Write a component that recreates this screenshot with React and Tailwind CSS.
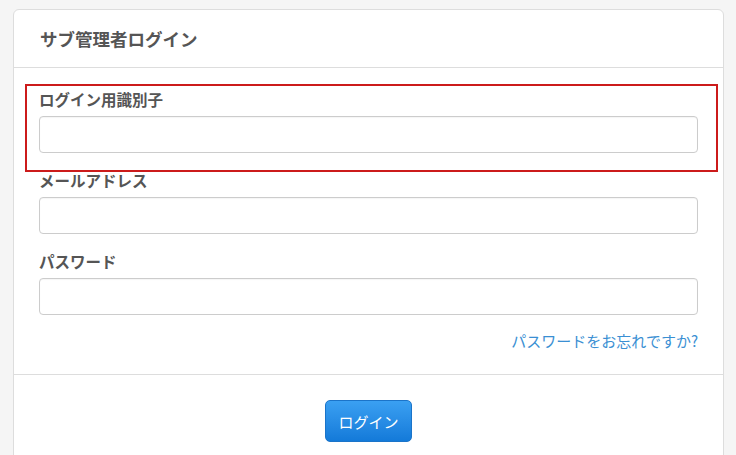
export default function App() {
    const font = { fontFamily: '"Noto Sans CJK JP", "Noto Sans", sans-serif' };
    const fields = ["ログイン用識別子", "メールアドレス", "パスワード"];

    return (
        <div className="min-h-[455px] bg-[#f5f5f5] pt-[9px] pl-[13px] overflow-hidden" style={font}>
            <div className="relative w-[711px] bg-white border border-[#dddddd] rounded-[6px]">
                <div className="h-[58px] px-[26px] flex items-center border-b border-[#dddddd]">
                    <h1 className="text-[17.5px] font-bold text-[#555555] leading-none">サブ管理者ログイン</h1>
                </div>

                <div className="px-[25px] pt-[21px] pb-[23px]">
                    {fields.map((label) => (
                        <div key={label} className="mb-[17px]">
                            <label className="block h-[20px] leading-[20px] text-[15.5px] font-bold text-[#555555] mb-[7px]">
                                {label}
                            </label>
                            <input
                                type={label === "パスワード" ? "password" : "text"}
                                className="block w-full h-[37px] border border-[#cccccc] rounded-[4px] bg-white shadow-[inset_0_1px_1px_rgba(0,0,0,0.04)] outline-none"
                            />
                        </div>
                    ))}
                    <div className="flex justify-end -mt-[1px]">
                        <a href="#" className="h-[20px] leading-[20px] text-[15px] text-[#3a8fd3]">
                            パスワードをお忘れですか?
                        </a>
                    </div>
                </div>

                <div className="border-t border-[#dddddd] pt-[25px] pb-[20px] flex justify-center">
                    <button className="w-[87px] h-[42px] rounded-[5px] border border-[#1b74c9] bg-gradient-to-b from-[#3aa0f2] to-[#137ad9] text-white text-[15px] leading-none">
                        ログイン
                    </button>
                </div>

                <div className="absolute left-[11px] top-[74px] w-[693px] h-[88px] border-2 border-[#cc1b1b] pointer-events-none" />
            </div>
        </div>
    );
}
